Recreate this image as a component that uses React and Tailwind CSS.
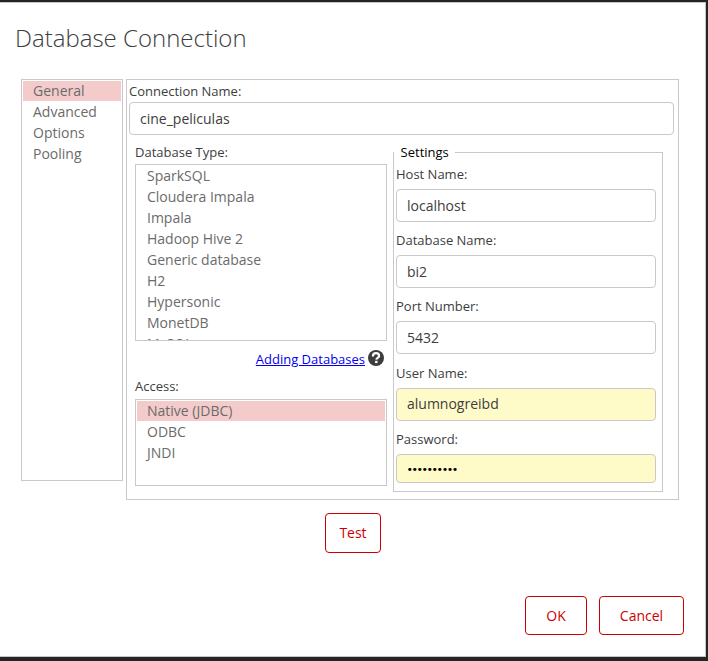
import React from "react";

const sections = ["General", "Advanced", "Options", "Pooling"];
const databaseTypes = [
  "SparkSQL",
  "Cloudera Impala",
  "Impala",
  "Hadoop Hive 2",
  "Generic database",
  "H2",
  "Hypersonic",
  "MonetDB",
  "MySQL",
];
const accessTypes = ["Native (JDBC)", "ODBC", "JNDI"];

function ListBox({ items, selected, className }) {
  return (
    <ul className={`overflow-hidden border border-[#c9c9c9] p-px text-[14px] text-[#6b6b6b] ${className}`}>
      {items.map((item) => (
        <li
          key={item}
          className={`mb-px h-5 pl-[10px] leading-[19px] whitespace-nowrap ${item === selected ? "bg-[#f4cbcb]" : ""}`}
        >
          {item}
        </li>
      ))}
    </ul>
  );
}

function Field({ label, value, className = "", inputClass = "h-[33px]", type = "text" }) {
  return (
    <label className={`block ${className}`}>
      <span className="block h-[24px] text-[13px] leading-[18px]">{label}</span>
      <input
        type={type}
        defaultValue={value}
        className={`block w-[260px] rounded-[4px] border border-[#c9c9c9] outline-none ${type === "password" ? "px-[9.4px] pt-[2px] font-['DejaVu_Sans',sans-serif] text-[11px] tracking-[-1.45px]" : "px-[10px] text-[14px]"} ${inputClass}`}
      />
    </label>
  );
}

function Button({ children, className }) {
  return (
    <button className={`rounded-[4px] border border-[#cc0000] text-[14px] text-[#cc0000] ${className}`}>
      {children}
    </button>
  );
}

export default function App() {
  return (
    <div className="h-[661px] w-[708px] overflow-hidden bg-[#252525] pt-[2px] font-['Open_Sans',sans-serif] text-[#3d3d3d]">
      <div className="flex h-[655px] w-[706px] flex-col border-t border-r border-b border-[#c4c6c4] bg-white">
        <h1 className="h-[76px] pt-[18px] pl-[15px] text-[24px] leading-[33px] font-light">
          Database Connection
        </h1>
        <div className="flex gap-[3px] pl-[21px]">
          <ListBox items={sections} selected="General" className="h-[402px] w-[102px]" />
          <div className="h-[421px] w-[553px] border border-[#c9c9c9] pl-[2px]">
            <label className="block">
              <span className="block h-[22px] pt-[2px] text-[13px] leading-[18px]">Connection Name:</span>
              <input
                defaultValue="cine_peliculas"
                className="block h-[33px] w-[545px] rounded-[4px] border border-[#c9c9c9] px-[10px] text-[14px] outline-none"
              />
            </label>
            <div className="flex gap-[6px] pl-[6px]">
              <div className="w-[252px] pt-[8px]">
                <div className="h-[21px] text-[13px] leading-[18px]">Database Type:</div>
                <ListBox items={databaseTypes} className="h-[177px]" />
                <div className="flex h-[36px] justify-end gap-[3px] pt-[9px] pr-[3px]">
                  <a href="#" className="text-[13px] leading-[18px] text-[#0000ee] underline">
                    Adding Databases
                  </a>
                  <svg width="16" height="16" viewBox="0 0 16 16">
                    <circle cx="8" cy="8" r="8" fill="#3d3d3d" />
                    <path
                      d="M4.9 6.4C4.9 4.3 6.2 3.2 8 3.2s3.1 1 3.1 2.7c0 2-2.6 2-2.8 3.7"
                      fill="none"
                      stroke="#fff"
                      strokeWidth="2.2"
                    />
                    <rect x="7.1" y="10.8" width="2.4" height="2.3" fill="#fff" />
                  </svg>
                </div>
                <div className="h-[22px] text-[13px] leading-[18px]">Access:</div>
                <ListBox items={accessTypes} selected="Native (JDBC)" className="h-[87px]" />
              </div>
              <fieldset className="mt-[7px] h-[350px] w-[270px] border border-[#c9c9c9] pl-[2px]">
                <legend className="ml-[-2px] h-[20px] w-[61px] pl-[6.6px] text-[13px] leading-[20px] text-black">
                  Settings
                </legend>
                <Field label="Host Name:" value="localhost" className="mt-[3px]" />
                <Field label="Database Name:" value="bi2" className="mt-[9px]" />
                <Field label="Port Number:" value="5432" className="mt-[9px]" />
                <Field
                  label="User Name:"
                  value="alumnogreibd"
                  className="mt-[10px]"
                  inputClass="h-[33px] bg-[#fffbc8] pb-[2px]"
                />
                <Field
                  label="Password:"
                  type="password"
                  value="password12"
                  className="mt-[9px]"
                  inputClass="h-[29px] bg-[#fffbc8] text-black"
                />
              </fieldset>
            </div>
          </div>
        </div>
        <div className="mt-[13px] flex pl-[325px]">
          <Button className="h-[40px] w-[56px] pb-[2px]">Test</Button>
        </div>
        <div className="mt-[43px] flex justify-end gap-3 pr-[21px]">
          <Button className="h-[39px] w-[62px]">OK</Button>
          <Button className="h-[39px] w-[85px]">Cancel</Button>
        </div>
      </div>
    </div>
  );
}
